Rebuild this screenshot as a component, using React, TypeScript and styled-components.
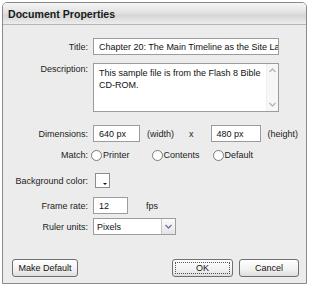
import styled, { createGlobalStyle } from 'styled-components'

const Global = createGlobalStyle`
  body {
    margin: 0;
    background: #fff;
    font-family: 'Liberation Sans', Arial, sans-serif;
  }
`

const Window = styled.div`
  margin: 2px 0 0 2px;
  width: 303px;
  height: 280px;
  border: 1px solid #8a8a8a;
  border-radius: 5px 5px 0 0;
  background: #ececec;
  display: flex;
  flex-direction: column;
  overflow: hidden;
`

const TitleBar = styled.div`
  height: 21px;
  display: flex;
  align-items: center;
  padding-left: 5px;
  font-weight: bold;
  font-size: 10.6px;
  color: #1a1a1a;
  background: linear-gradient(#f6f6f6, #e2e2e2 45%, #d6d6d6 60%, #ededed);
  border-bottom: 1px solid #b4b4b4;
`

const Body = styled.div`
  flex: 1;
  display: flex;
  flex-direction: column;
  padding: 0 0 0 1px;
  font-size: 9px;
  color: #222;
`

const Row = styled.div<{ $top: number; $h: number }>`
  display: grid;
  grid-template-columns: 84px 1fr;
  column-gap: 5px;
  margin-top: ${(p) => p.$top}px;
  height: ${(p) => p.$h}px;
  align-items: center;
`

const Label = styled.div<{ $top?: boolean }>`
  text-align: right;
  white-space: nowrap;
  align-self: ${(p) => (p.$top ? 'start' : 'center')};
  padding-top: ${(p) => (p.$top ? '1px' : '0')};
`

const Field = styled.div`
  display: flex;
  align-items: center;
  height: 100%;
  white-space: nowrap;
  min-width: 0;
`

const Input = styled.div<{ $w: number }>`
  box-sizing: border-box;
  flex: none;
  width: ${(p) => p.$w}px;
  height: 100%;
  border: 1px solid #9c9c9c;
  background: #fff;
  padding: 0 5px;
  display: flex;
  align-items: center;
  white-space: nowrap;
  overflow: hidden;
  color: #111;
`

const TextArea = styled.div`
  box-sizing: border-box;
  width: 186px;
  height: 100%;
  border: 1px solid #9c9c9c;
  background: #fff;
  display: flex;
`

const TextBody = styled.div`
  flex: 1;
  padding: 3px 5px;
  line-height: 12px;
  white-space: nowrap;
  color: #111;
`

const ScrollBar = styled.div`
  width: 13px;
  display: flex;
  flex-direction: column;
  justify-content: space-between;
  align-items: center;
  background: #f7f7f7;
  border-left: 1px solid #f0f0f0;
  padding: 4px 0;
`

const Unit = styled.span<{ $ml: number }>`
  flex: none;
  margin-left: ${(p) => p.$ml}px;
`

const Radio = styled.span<{ $ml: number }>`
  display: inline-flex;
  align-items: center;
  gap: 1px;
  margin-left: ${(p) => p.$ml}px;
  &::before {
    content: '';
    width: 9px;
    height: 9px;
    border: 1px solid #7a7a7a;
    border-radius: 50%;
    background: #fff;
  }
`

const Swatch = styled.div`
  position: relative;
  box-sizing: border-box;
  width: 15px;
  height: 15px;
  margin-left: 2px;
  border: 1px solid #8c8c8c;
  background: #fff;
  &::after {
    content: '';
    position: absolute;
    right: 2px;
    bottom: 2px;
    border-left: 2px solid transparent;
    border-right: 2px solid transparent;
    border-top: 2px solid #111;
  }
`

const Select = styled.div`
  box-sizing: border-box;
  width: 83px;
  height: 100%;
  border: 1px solid #9c9c9c;
  background: #fff;
  display: flex;
  align-items: stretch;
`

const SelectText = styled.div`
  flex: 1;
  display: flex;
  align-items: center;
  padding-left: 3px;
  color: #111;
`

const SelectButton = styled.div`
  width: 13px;
  display: flex;
  align-items: center;
  justify-content: center;
  background: linear-gradient(#fbfbfb, #e4e4e4);
  border-left: 1px solid #c8c8c8;
`

const Footer = styled.div`
  display: flex;
  align-items: center;
  margin-top: 24px;
  height: 18px;
  padding: 0 7px 0 8px;
`

const Button = styled.div<{ $w: number; $focus?: boolean; $ml?: string }>`
  box-sizing: border-box;
  width: ${(p) => p.$w}px;
  height: 18px;
  margin-left: ${(p) => p.$ml ?? '0'};
  border: 1px solid #6f6f6f;
  border-radius: 3px;
  background: linear-gradient(#ffffff, #f1f1f1 60%, #dedede);
  display: flex;
  align-items: center;
  justify-content: center;
  font-size: 9px;
  color: #111;
  position: relative;
  ${(p) =>
    p.$focus
      ? `&::after { content: ''; position: absolute; inset: 2px; border: 1px dotted #555; }`
      : ''}
`

const Chevron = ({ up, color = '#b5b5b5' }: { up?: boolean; color?: string }) => (
  <svg width="7" height="5" viewBox="0 0 7 5">
    <path
      d={up ? 'M0.5 4 L3.5 1 L6.5 4' : 'M0.5 1 L3.5 4 L6.5 1'}
      fill="none"
      stroke={color}
      strokeWidth="1.3"
    />
  </svg>
)

export default function App() {
  return (
    <>
      <Global />
      <Window>
        <TitleBar>Document Properties</TitleBar>
        <Body>
          <Row $top={13} $h={17}>
            <Label>Title:</Label>
            <Field>
              <Input $w={186}>Chapter 20: The Main Timeline as the Site Layout</Input>
            </Field>
          </Row>
          <Row $top={8} $h={49}>
            <Label $top>Description:</Label>
            <Field>
              <TextArea>
                <TextBody>
                  This sample file is from the Flash 8 Bible
                  <br />
                  CD-ROM.
                </TextBody>
                <ScrollBar>
                  <Chevron up />
                  <Chevron />
                </ScrollBar>
              </TextArea>
            </Field>
          </Row>
          <Row $top={13} $h={17}>
            <Label>Dimensions:</Label>
            <Field>
              <Input $w={47}>640 px</Input>
              <Unit $ml={7}>(width)</Unit>
              <Unit $ml={15}>x</Unit>
              <Input $w={50} style={{ marginLeft: 17 }}>
                480 px
              </Input>
              <Unit $ml={7}>(height)</Unit>
            </Field>
          </Row>
          <Row $top={6} $h={14}>
            <Label>Match:</Label>
            <Field>
              <Radio $ml={-2}>Printer</Radio>
              <Radio $ml={22}>Contents</Radio>
              <Radio $ml={13}>Default</Radio>
            </Field>
          </Row>
          <Row $top={11} $h={15}>
            <Label>Background color:</Label>
            <Field>
              <Swatch />
            </Field>
          </Row>
          <Row $top={9} $h={17}>
            <Label>Frame rate:</Label>
            <Field>
              <Input $w={35}>12</Input>
              <Unit $ml={18}>fps</Unit>
            </Field>
          </Row>
          <Row $top={4} $h={17}>
            <Label>Ruler units:</Label>
            <Field>
              <Select>
                <SelectText>Pixels</SelectText>
                <SelectButton>
                  <Chevron color="#6b7a99" />
                </SelectButton>
              </Select>
            </Field>
          </Row>
          <Footer>
            <Button $w={66}>Make Default</Button>
            <Button $w={61} $focus $ml="auto">
              OK
            </Button>
            <Button $w={60} $ml="6px">
              Cancel
            </Button>
          </Footer>
        </Body>
      </Window>
    </>
  )
}
